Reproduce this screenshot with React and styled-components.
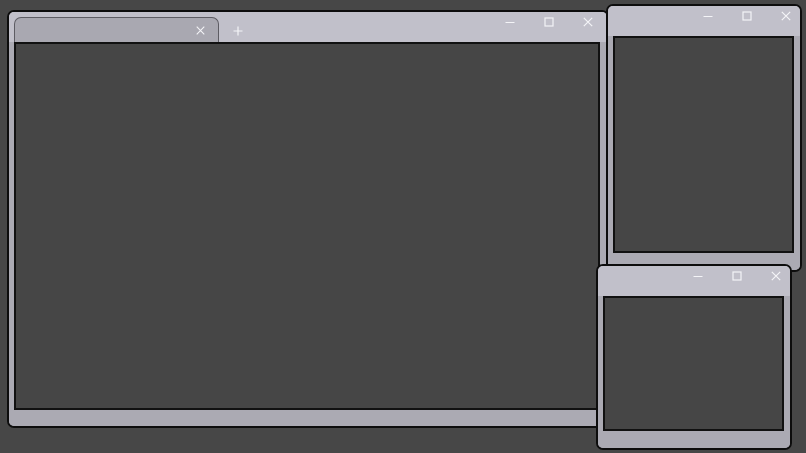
import React from "react"
import styled, { createGlobalStyle } from "styled-components"

const GlobalStyle = createGlobalStyle`
  html, body {
    margin: 0;
    padding: 0;
    background: #474747;
    font-family: "Liberation Sans", Arial, sans-serif;
  }
`

const Desktop = styled.div`
  position: relative;
  width: 806px;
  height: 453px;
  overflow: hidden;
  background: #474747;
`

const Frame = styled.div`
  position: absolute;
  box-sizing: border-box;
  display: flex;
  flex-direction: column;
  border: 2px solid #0d0d0d;
  border-radius: 7px;
  background: #abaab3;
  overflow: hidden;
`

const TitleBar = styled.div`
  display: flex;
  align-items: flex-end;
  height: 30px;
  flex-shrink: 0;
  background: #c1c0ca;
  padding-left: ${(p) => p.$padLeft || 0}px;
  padding-right: ${(p) => p.$padRight || 0}px;
`

const Spacer = styled.div`
  flex: 1;
`

const Controls = styled.div`
  display: flex;
  gap: 11px;
  align-self: flex-start;
`

const ControlButton = styled.div`
  width: 28px;
  height: 20px;
  display: flex;
  align-items: center;
  justify-content: center;
`

const Body = styled.div`
  flex: 1;
  display: flex;
  padding: 0 ${(p) => p.$right}px ${(p) => p.$bottom}px 5px;
  background: #abaab3;
`

const Content = styled.div`
  flex: 1;
  box-sizing: border-box;
  background: #464646;
  border: 2px solid #111;
`

const Tab = styled.div`
  box-sizing: border-box;
  width: 205px;
  height: 26px;
  margin-bottom: -1px;
  display: flex;
  align-items: center;
  justify-content: flex-end;
  padding-right: 13px;
  background: #a9a8b1;
  border: 1px solid #5d5c63;
  border-bottom: none;
  border-radius: 7px 7px 0 0;
`

const NewTab = styled.div`
  box-sizing: border-box;
  width: 38px;
  height: 26px;
  padding-top: 3px;
  display: flex;
  align-items: center;
  justify-content: center;
`

const Icon = ({ kind, size = 10 }) => (
  <svg width={size} height={size} viewBox="0 0 10 10" fill="none" stroke="#f4f4f7" strokeWidth="1.2">
    {kind === "min" && <path d="M0.5 5.5 H9.5" />}
    {kind === "max" && <rect x="1" y="1" width="8" height="8" />}
    {kind === "close" && <path d="M0.8 0.8 L9.2 9.2 M9.2 0.8 L0.8 9.2" />}
    {kind === "plus" && <path d="M5 0.5 V9.5 M0.5 5 H9.5" />}
  </svg>
)

const WindowControls = () => (
  <Controls>
    <ControlButton>
      <Icon kind="min" />
    </ControlButton>
    <ControlButton>
      <Icon kind="max" />
    </ControlButton>
    <ControlButton>
      <Icon kind="close" />
    </ControlButton>
  </Controls>
)

const windows = [
  { id: "small-top", left: 606, top: 4, width: 196, height: 268 },
  { id: "small-bottom", left: 596, top: 264, width: 196, height: 186 },
]

export default function App() {
  return (
    <>
      <GlobalStyle />
      <Desktop>
        <Frame style={{ left: 7, top: 10, width: 602, height: 418 }}>
          <TitleBar $padLeft={5} $padRight={5}>
            <Tab>
              <Icon kind="close" size={9} />
            </Tab>
            <NewTab>
              <Icon kind="plus" size={10} />
            </NewTab>
            <Spacer />
            <WindowControls />
          </TitleBar>
          <Body $right={7} $bottom={16}>
            <Content />
          </Body>
        </Frame>
        {windows.map((w) => (
          <Frame
            key={w.id}
            style={{ left: w.left, top: w.top, width: w.width, height: w.height }}
          >
            <TitleBar>
              <Spacer />
              <WindowControls />
            </TitleBar>
            <Body $right={6} $bottom={17}>
              <Content />
            </Body>
          </Frame>
        ))}
      </Desktop>
    </>
  )
}
